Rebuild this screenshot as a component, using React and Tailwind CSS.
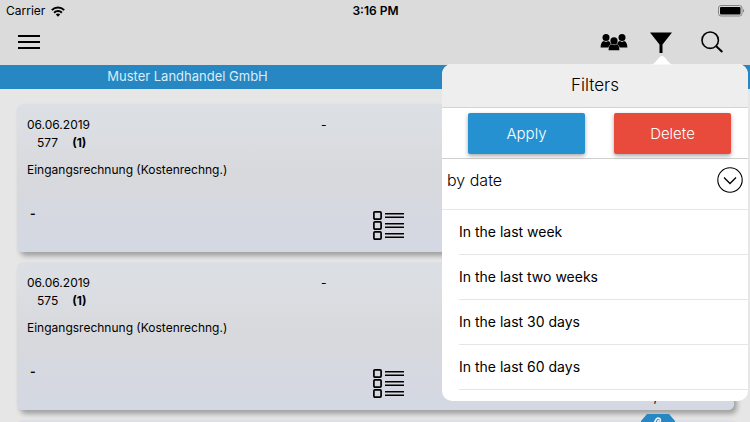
/**
 * Invoice overview with the date filter popover opened.
 */

const INVOICES = [
  { id: '577', date: '06.06.2019', count: 1, type: 'Eingangsrechnung (Kostenrechng.)', amount: '' },
  { id: '575', date: '06.06.2019', count: 1, type: 'Eingangsrechnung (Kostenrechng.)', amount: ',' },
];

const DATE_FILTERS = [
  'In the last week',
  'In the last two weeks',
  'In the last 30 days',
  'In the last 60 days',
];

function WifiIcon() {
  return (
    <svg width="14" height="11" viewBox="0 0 14 11" fill="none" stroke="black" strokeWidth="2">
      <path d="M0.8 4.1a8.8 8.8 0 0 1 12.4 0" />
      <path d="M3.1 6.7a5.6 5.6 0 0 1 7.8 0" />
      <path d="M7 10.8 4.8 8.6a3.2 3.2 0 0 1 4.4 0z" fill="black" stroke="none" />
    </svg>
  );
}

function BatteryIcon() {
  return (
    <svg width="27" height="12" viewBox="0 0 27 12">
      <rect x="0.5" y="0.5" width="23.5" height="10.5" rx="2.5" fill="none" stroke="#858585" />
      <rect x="2" y="2" width="20.5" height="7.5" rx="1" fill="black" />
      <path d="M25 4v3.6c1.6-.6 1.6-3 0-3.6z" fill="#858585" />
    </svg>
  );
}

function PeopleIcon() {
  return (
    <svg width="28" height="18" viewBox="0 0 28 18">
      <circle cx="6" cy="4.6" r="3.5" />
      <path d="M0.6 14.6c0-3.6 1-6 3.2-6.6l2.2 1 2.2-1c2 .6 3.2 3 3.2 6.600z" />
      <circle cx="22" cy="4.6" r="3.5" />
      <path d="M16.6 14.600c0-3.6 1-6 3.200-6.600l2.200 1 2.200-1c2 .6 3.200 3 3.200 6.600z" />
      <g stroke="#dbdbdb" strokeWidth="0.8" paintOrder="stroke">
        <path d="M8.600 17.200c0-3.400 1-5.400 3.200-6l2.200 1 2.200-1c2.200.6 3.200 2.600 3.200 6z" />
        <circle cx="14" cy="7.900" r="3.600" />
      </g>
    </svg>
  );
}

function FunnelIcon() {
  return (
    <svg width="22" height="21" viewBox="0 0 22 21">
      <path d="M0 0.500h22l-9.500 12V21h-3v-8.500z" />
    </svg>
  );
}

function SearchIcon() {
  return (
    <svg width="22" height="22" viewBox="0 0 22 22" fill="none" stroke="black">
      <circle cx="9.200" cy="9.200" r="8.200" strokeWidth="1.600" />
      <path d="M15 15l6.300 6" strokeWidth="2" />
    </svg>
  );
}

function ListIcon() {
  return (
    <svg width="31" height="30" viewBox="0 0 31 30" fill="none" stroke="black">
      {[0, 10, 20].map((y) => (
        <g key={y}>
          <rect x="0.900" y={y + 0.9} width="7.200" height="7.200" rx="1" strokeWidth="1.700" />
          <path d={`M12 ${y + 2.8}h19M12 ${y + 6.200}h19`} strokeWidth="1.500" />
        </g>
      ))}
    </svg>
  );
}

function ChevronCircleIcon() {
  return (
    <svg width="26" height="26" viewBox="0 0 26 26" fill="none" stroke="black">
      <circle cx="13" cy="13" r="12.200" strokeWidth="1.100" />
      <path d="M7 10.500l6 6 6-6" strokeWidth="1.300" />
    </svg>
  );
}

function AttachmentBadge() {
  return (
    <svg width="34" height="34" viewBox="0 0 34 34">
      <path d="M6 0h22l6 7v20l-6 7H6l-6-7V7z" fill="#2687c2" />
      <path
        d="M11 13l4-7.500c1.400-2.600 5.200-1.200 4.200 1.800l-5 11M15.500 10l2-3.500"
        fill="none"
        stroke="#e6f2fa"
        strokeWidth="1.600"
        strokeLinecap="round"
      />
    </svg>
  );
}

function Card({ children }) {
  return (
    <article className="relative h-[148px] shrink-0 rounded-md bg-linear-to-b from-[#dce0e5] via-[#d8d9dd] to-[#d4d8e3] px-[10px] pt-3 shadow-[3px_4px_5px_rgba(0,0,0,0.3)]">
      {children}
    </article>
  );
}

function InvoiceCard({ invoice }) {
  return (
    <Card>
      <div className="flex">
        <span className="w-[294px]">{invoice.date}</span>
        <span>-</span>
      </div>
      <div className="flex gap-[14px] pl-[10px]">
        <span>{invoice.id}</span>
        <strong className="font-bold">({invoice.count})</strong>
      </div>
      <p className="mt-[9px]">{invoice.type}</p>
      <div className="mt-[26px] flex items-start">
        <strong className="w-[346px] pl-[3px] font-bold">-</strong>
        <button type="button" aria-label="Details" className="mt-[6px]">
          <ListIcon />
        </button>
        <span className="ml-auto mt-[26px] pr-[67px]">{invoice.amount}</span>
      </div>
    </Card>
  );
}

function FilterPopover() {
  return (
    <section className="absolute top-[64px] right-[2px] w-[306px]">
      <svg width="20" height="10" viewBox="0 0 20 10" className="absolute -top-[9px] right-[76px]">
        <path d="M0 9.500C4 8 7 1 10 1s6 7 10 8.500z" fill="white" />
      </svg>
      <div className="overflow-hidden rounded-[10px] bg-white">
        <h2 className="border-b border-[#d4d4d4] bg-[#eeeeee] text-center text-[17px] leading-[43px] font-light">
          Filters
        </h2>
        <div className="grid grid-cols-2 gap-[29px] border-b border-[#cfcfcf] pt-[5px] pr-[17px] pb-1 pl-[26px] text-[15px] font-light text-white">
          <button type="button" className="h-[41px] rounded-xs bg-[#2591d1] shadow-[0_2px_4px_rgba(0,0,0,0.35)]">
            Apply
          </button>
          <button type="button" className="h-[41px] rounded-xs bg-[#e84b3c] shadow-[0_2px_4px_rgba(0,0,0,0.35)]">
            Delete
          </button>
        </div>
        <button
          type="button"
          className="flex h-[51px] w-full items-start justify-between border-b border-[#e6e6e6] pt-2 pr-[5px] pl-[5px] text-[16px] leading-[26px] font-light"
        >
          by date
          <ChevronCircleIcon />
        </button>
        <ul className="pb-[11px] pl-[17px] text-[14px]">
          {DATE_FILTERS.map((label) => (
            <li key={label} className="border-b border-[#e6e6e6]">
              <button type="button" className="h-11 w-full text-left">
                {label}
              </button>
            </li>
          ))}
        </ul>
      </div>
    </section>
  );
}

export default function App() {
  return (
    <div className="relative flex h-screen flex-col overflow-hidden bg-[#e6e6e6] font-['Inter',sans-serif] text-[12px] leading-[18px] text-black">
      <div className="grid h-[22px] shrink-0 grid-cols-3 items-center bg-[#dbdbdb] pr-[5px] pl-[6px]">
        <div className="flex items-center gap-[6px]">
          Carrier
          <WifiIcon />
        </div>
        <span className="text-center font-semibold">3:16 PM</span>
        <div className="flex justify-end">
          <BatteryIcon />
        </div>
      </div>

      <header className="flex h-[43px] shrink-0 items-center justify-between bg-[#dbdbdb] pr-[27px] pb-[3px] pl-[18px]">
        <button type="button" aria-label="Menu" className="flex flex-col gap-1">
          <span className="h-[2px] w-[22px] bg-black" />
          <span className="h-[2px] w-[22px] bg-black" />
          <span className="h-[2px] w-[22px] bg-black" />
        </button>
        <div className="flex items-center">
          <button type="button" aria-label="Customers" className="mr-[22px]">
            <PeopleIcon />
          </button>
          <button type="button" aria-label="Filters" className="mr-[29px]">
            <FunnelIcon />
          </button>
          <button type="button" aria-label="Search">
            <SearchIcon />
          </button>
        </div>
      </header>

      <div className="grid h-6 shrink-0 grid-cols-2 bg-[#2687c2] text-center text-[13px] leading-[22px] text-[#dcecf6]">
        <h1>Muster Landhandel GmbH</h1>
      </div>

      <main className="flex flex-col gap-[10px] pt-[15px] pr-4 pl-[17px]">
        {INVOICES.map((invoice) => (
          <InvoiceCard key={invoice.id} invoice={invoice} />
        ))}
        <Card>
          <div className="absolute -top-[6px] right-[59px]">
            <AttachmentBadge />
          </div>
        </Card>
      </main>

      <FilterPopover />
    </div>
  );
}
